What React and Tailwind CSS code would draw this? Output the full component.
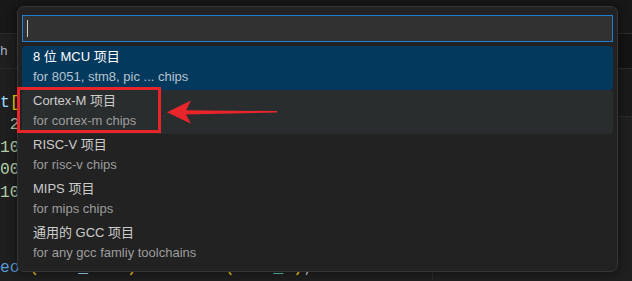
const items = [
  { title: "8 位 MCU 项目", detail: "for 8051, stm8, pic ... chips", state: "selected" },
  { title: "Cortex-M 项目", detail: "for cortex-m chips", state: "hover" },
  { title: "RISC-V 项目", detail: "for risc-v chips" },
  { title: "MIPS 项目", detail: "for mips chips" },
  { title: "通用的 GCC 项目", detail: "for any gcc famliy toolchains" },
];

function PickItem({ item }) {
  const bg =
    item.state === "selected" ? "bg-[#04395e]" : item.state === "hover" ? "bg-[#2a2d2e]" : "";
  const titleColor = item.state === "selected" ? "text-[#ffffff]" : "text-[#cccccc]";
  const detailColor = item.state === "selected" ? "text-[#b6c3cd]" : "text-[#9d9d9d]";
  return (
    <li className={`h-[44px] rounded-[4px] pl-[11px] pt-[1px] ${bg}`}>
      <p className={`h-[20px] text-[13px] leading-[20px] ${titleColor}`}>{item.title}</p>
      <p className={`h-[20px] text-[13px] leading-[20px] ${detailColor}`}>{item.detail}</p>
    </li>
  );
}

function CodeArea() {
  return (
    <div className="font-['Liberation_Mono',monospace] text-[16.3px] leading-[22.5px] whitespace-pre">
      <div className="h-[22.5px]"></div>
      <div>
        <span className="text-[#9cdcfe]">t</span>
        <span className="text-[#ffd700]">[</span>
      </div>
      <div className="text-[#b5cea8]"> 2</div>
      <div className="text-[#b5cea8]">10</div>
      <div className="text-[#b5cea8]">00</div>
      <div className="text-[#b5cea8]">10</div>
      <div className="h-[53px]"></div>
      <div>
        <span className="text-[#569cd6]">eof</span>
        <span className="text-[#ffd700]">(</span>
        <span className="text-[#9cdcfe]">task_list</span>
        <span className="text-[#ffd700]">)</span>
        <span className="text-[#d4d4d4]"> / </span>
        <span className="text-[#569cd6]">sizeof</span>
        <span className="text-[#ffd700]">(</span>
        <span className="text-[#4ec9b0]">task_t</span>
        <span className="text-[#ffd700]">)</span>
        <span className="text-[#d4d4d4]">;</span>
      </div>
    </div>
  );
}

export default function App() {
  return (
    <div className="relative h-[281px] w-[632px] overflow-hidden bg-[#1f1f1f] font-['Liberation_Sans','Noto_Sans_CJK_SC',sans-serif]">
      <div className="h-[34px] border-b border-[#2b2b2b] bg-[#181818]"></div>

      <div className="flex">
        <div className="flex-1">
          <div className="flex h-[35px] items-center border-b border-[#2b2b2b] bg-[#181818]">
            <div className="flex h-full w-[120px] items-center bg-[#1f1f1f]">
              <span className="ml-[-7px] text-[13px] text-[#a9b4c2]">t.h</span>
            </div>
          </div>
          <CodeArea />
        </div>
        <div className="w-[200px] border-l border-[#2b2b2b]">
          <div className="h-[35px] border-b border-[#2b2b2b] bg-[#141414]"></div>
          <div className="h-[48px] border-b border-[#2b2b2b] bg-[#1a1a1a]"></div>
        </div>
      </div>

      <div className="absolute left-[17px] top-[6px] h-[266px] w-[601px] rounded-[7px] border border-[#353535] bg-[#222222] shadow-[0_0_8px_2px_rgba(0,0,0,0.36)]">
        <div className="mx-[4px] mt-[8px] flex h-[27px] items-center border border-[#1f7fd2] bg-[#313131] pl-[4px]">
          <span className="h-[17px] w-px bg-[#cccccc]"></span>
        </div>
        <ul className="mx-[4px] mt-[4px]">
          {items.map((item) => (
            <PickItem key={item.title} item={item} />
          ))}
        </ul>
      </div>

      <div className="absolute left-[17px] top-[87px] h-[46px] w-[144px] border-[3px] border-[#e8252b]"></div>
      <svg className="absolute left-0 top-0" width="632" height="281" viewBox="0 0 632 281">
        <polygon
          points="167,112.3 191,100.5 186,110.2 277,111.1 277,112.6 186,114.6 191,123.8"
          fill="#e8252b"
        />
      </svg>
    </div>
  );
}
